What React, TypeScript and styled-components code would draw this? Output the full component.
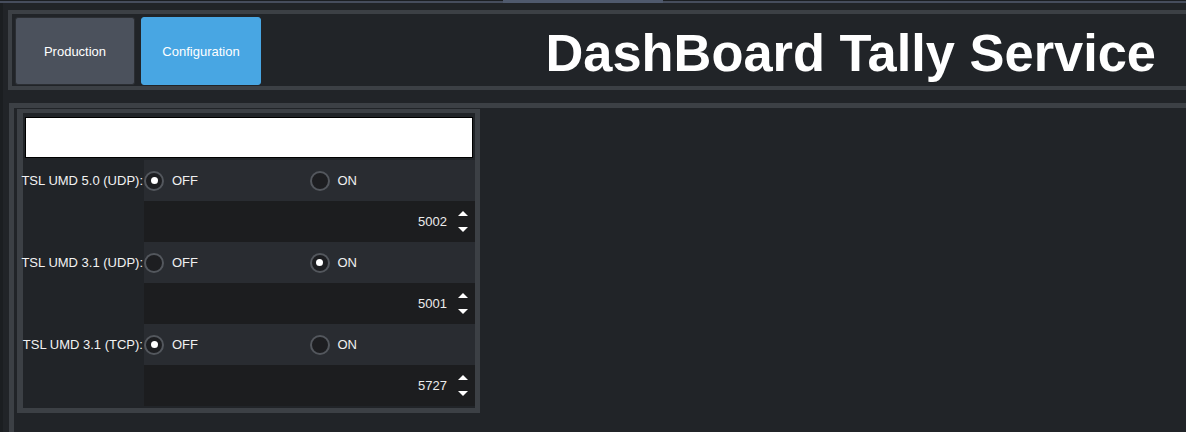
import React from 'react';
import styled, { createGlobalStyle } from 'styled-components';

const GlobalStyle = createGlobalStyle`
  html, body {
    margin: 0;
    padding: 0;
    background: #212428;
    overflow: hidden;
  }
  body {
    font-family: "Liberation Sans", Arial, sans-serif;
    color: #ffffff;
  }
  #root { height: 432px; }
  * { box-sizing: border-box; }
`;

const Page = styled.div`
  height: 432px;
  display: flex;
  flex-direction: column;
`;

const TopStrip = styled.div`
  display: grid;
  grid-template-columns: 503px 160px 1fr;
  height: 3px;
  background: #1b1e22;
`;

const Rail = styled.div`
  margin-top: 1px;
  background: #464d5d;
`;

const Thumb = styled.div`
  background: #4f596d;
`;

const Shell = styled.div`
  flex: 1;
  min-height: 0;
  display: flex;
  flex-direction: column;
  border-left: 3px solid #1b1e21;
`;

const HeaderPanel = styled.header`
  margin: 7px 0 0 5px;
  height: 80px;
  border: 4px solid #3c4045;
  border-right: none;
  padding: 3px 0 1px 3px;
  display: flex;
  align-items: stretch;
  gap: 6px;
`;

const NavButton = styled.button<{ $active?: boolean }>`
  width: 120px;
  height: 68px;
  border-radius: 3px;
  border: 1px solid ${(p) => (p.$active ? '#48a6e3' : '#2b2e33')};
  background: ${(p) => (p.$active ? '#48a6e3' : '#4b515c')};
  color: #ffffff;
  font-family: "Liberation Sans", Arial, sans-serif;
  font-size: 13px;
  padding: 0;
  cursor: pointer;
`;

const Title = styled.h1`
  margin: 0 0 0 auto;
  align-self: center;
  padding: 3px 30px 0 0;
  font-family: "Liberation Sans", Arial, sans-serif;
  font-weight: bold;
  font-size: 52.4px;
  line-height: 52px;
  color: #ffffff;
  white-space: nowrap;
`;

const ContentPanel = styled.main`
  flex: 1;
  margin: 13px 0 0 6px;
  border-top: 5px solid #3c4045;
  border-left: 5px solid #3c4045;
  padding: 1px 0 0 3px;
  display: flex;
  align-items: flex-start;
`;

const Card = styled.section`
  width: 463px;
  border-style: solid;
  border-color: #3c4045;
  border-width: 4px 5px 5px 6px;
  background: #212428;
  padding: 4px 0 2px 0;
  display: flex;
  flex-direction: column;
`;

const NameInput = styled.div`
  height: 41px;
  margin: 0 2px 2px 2px;
  background: #ffffff;
  border: 1px solid #000000;
`;

const Grid = styled.div`
  display: grid;
  grid-template-columns: 121px 1fr;
  grid-auto-rows: 41px;
`;

const Label = styled.div`
  grid-row: span 2;
  align-self: start;
  height: 41px;
  display: flex;
  align-items: center;
  justify-content: flex-end;
  padding-right: 1px;
  font-size: 13px;
  color: #f2f2f2;
  white-space: nowrap;
`;

const RadioRow = styled.div`
  display: grid;
  grid-template-columns: 1fr 1fr;
  align-items: center;
  background: #292c31;
`;

const Option = styled.label`
  display: flex;
  align-items: center;
  gap: 8px;
  font-size: 13px;
  color: #f0f0f0;
`;

const RadioCircle = styled.span<{ $checked?: boolean }>`
  width: 20px;
  height: 20px;
  border-radius: 50%;
  border: 2px solid #53575d;
  background: #1d1e21;
  display: flex;
  align-items: center;
  justify-content: center;

  &::after {
    content: '';
    width: 7px;
    height: 7px;
    border-radius: 50%;
    background: #ffffff;
    display: ${(p) => (p.$checked ? 'block' : 'none')};
  }
`;

const PortRow = styled.div`
  display: flex;
  align-items: center;
  justify-content: flex-end;
  gap: 11px;
  padding-right: 7px;
  background: #1c1d1f;
  font-size: 13px;
  color: #ececec;
`;

const Spinner = () => (
  <svg width="10" height="21" viewBox="0 0 10 21" aria-hidden="true">
    <polygon points="0,5 5,0 10,5" fill="#ffffff" />
    <polygon points="0,16 10,16 5,21" fill="#ffffff" />
  </svg>
);

const protocols = [
  { name: 'TSL UMD 5.0 (UDP):', on: false, port: '5002' },
  { name: 'TSL UMD 3.1 (UDP):', on: true, port: '5001' },
  { name: 'TSL UMD 3.1 (TCP):', on: false, port: '5727' },
];

export default function App() {
  return (
    <>
      <GlobalStyle />
      <Page>
        <TopStrip>
          <Rail />
          <Thumb />
          <Rail />
        </TopStrip>
        <Shell>
          <HeaderPanel>
            <NavButton>Production</NavButton>
            <NavButton $active>Configuration</NavButton>
            <Title>DashBoard Tally Service</Title>
          </HeaderPanel>
          <ContentPanel>
            <Card>
              <NameInput />
              <Grid>
                {protocols.map((p) => (
                  <React.Fragment key={p.name}>
                    <Label>{p.name}</Label>
                    <RadioRow>
                      <Option>
                        <RadioCircle $checked={!p.on} />
                        OFF
                      </Option>
                      <Option>
                        <RadioCircle $checked={p.on} />
                        ON
                      </Option>
                    </RadioRow>
                    <PortRow>
                      <span>{p.port}</span>
                      <Spinner />
                    </PortRow>
                  </React.Fragment>
                ))}
              </Grid>
            </Card>
          </ContentPanel>
        </Shell>
      </Page>
    </>
  );
}
